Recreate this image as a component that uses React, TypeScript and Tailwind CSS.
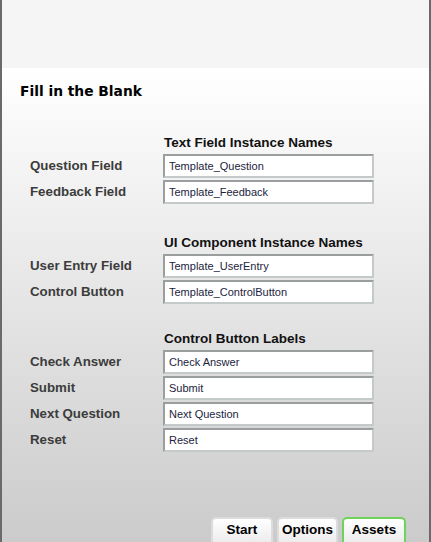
import React from 'react';

type Row = { label: string; value: string };

const sections: { title: string; rows: Row[]; gap: string }[] = [
    {
        title: 'Text Field Instance Names',
        gap: 'mt-[35px]',
        rows: [
            { label: 'Question Field', value: 'Template_Question' },
            { label: 'Feedback Field', value: 'Template_Feedback' },
        ],
    },
    {
        title: 'UI Component Instance Names',
        gap: 'mt-[31px]',
        rows: [
            { label: 'User Entry Field', value: 'Template_UserEntry' },
            { label: 'Control Button', value: 'Template_ControlButton' },
        ],
    },
    {
        title: 'Control Button Labels',
        gap: 'mt-[27px]',
        rows: [
            { label: 'Check Answer', value: 'Check Answer' },
            { label: 'Submit', value: 'Submit' },
            { label: 'Next Question', value: 'Next Question' },
            { label: 'Reset', value: 'Reset' },
        ],
    },
];

function Field({ label, value }: Row) {
    return (
        <div className="flex items-center h-[24px]">
            <span className="w-[161px] shrink-0 pl-[28px] text-[13.3px] font-bold text-[#3c3c3c] leading-none">{label}</span>
            <div className="w-[211px] shrink-0 h-[24px] bg-white border-2 border-t-[#9a9e9e] border-l-[#9a9e9e] border-r-[#c4caca] border-b-[#c4caca] flex items-center pl-[4px]">
                <span className="text-[11px] text-[#1c2440] leading-none">{value}</span>
            </div>
        </div>
    );
}

function Tab({ label, active }: { label: string; active?: boolean }) {
    return (
        <div
            className={`h-[25px] rounded-t-[5px] border-2 border-b-0 flex items-center justify-center text-[13.5px] font-bold text-black bg-gradient-to-b from-white to-[#ececec] ${active ? 'border-[#6fd35a]' : 'border-[#dcdcdc]'}`}
            style={{ width: active ? 64 : label === 'Start' ? 62 : 61 }}
        >
            {label}
        </div>
    );
}

export default function App() {
    return (
        <div
            className="w-[431px] h-[542px] flex flex-col border-x-2 border-[#6a6a6a] overflow-hidden"
            style={{ fontFamily: '"Liberation Sans", Arial, sans-serif' }}
        >
            <div className="h-[68px] shrink-0 bg-[#f5f5f5]" />
            <div className="flex-1 flex flex-col bg-gradient-to-b from-white to-[#cbcbcb]">
                <h1
                    className="pt-[14px] pl-[18px] text-[13.8px] leading-[18px] font-bold text-black"
                    style={{ fontFamily: '"DejaVu Sans", Verdana, sans-serif' }}
                >
                    Fill in the Blank
                </h1>

                {sections.map((s) => (
                    <div key={s.title} className={s.gap}>
                        <div className="pl-[162px] h-[16px] text-[13.5px] leading-[16px] font-bold text-[#111]">{s.title}</div>
                        <div className="mt-[3px] flex flex-col gap-[2px]">
                            {s.rows.map((r) => (
                                <Field key={r.label} {...r} />
                            ))}
                        </div>
                    </div>
                ))}

                <div className="mt-auto flex justify-end gap-[4px] pr-[23px]">
                    <Tab label="Start" />
                    <Tab label="Options" />
                    <Tab label="Assets" active />
                </div>
            </div>
        </div>
    );
}
